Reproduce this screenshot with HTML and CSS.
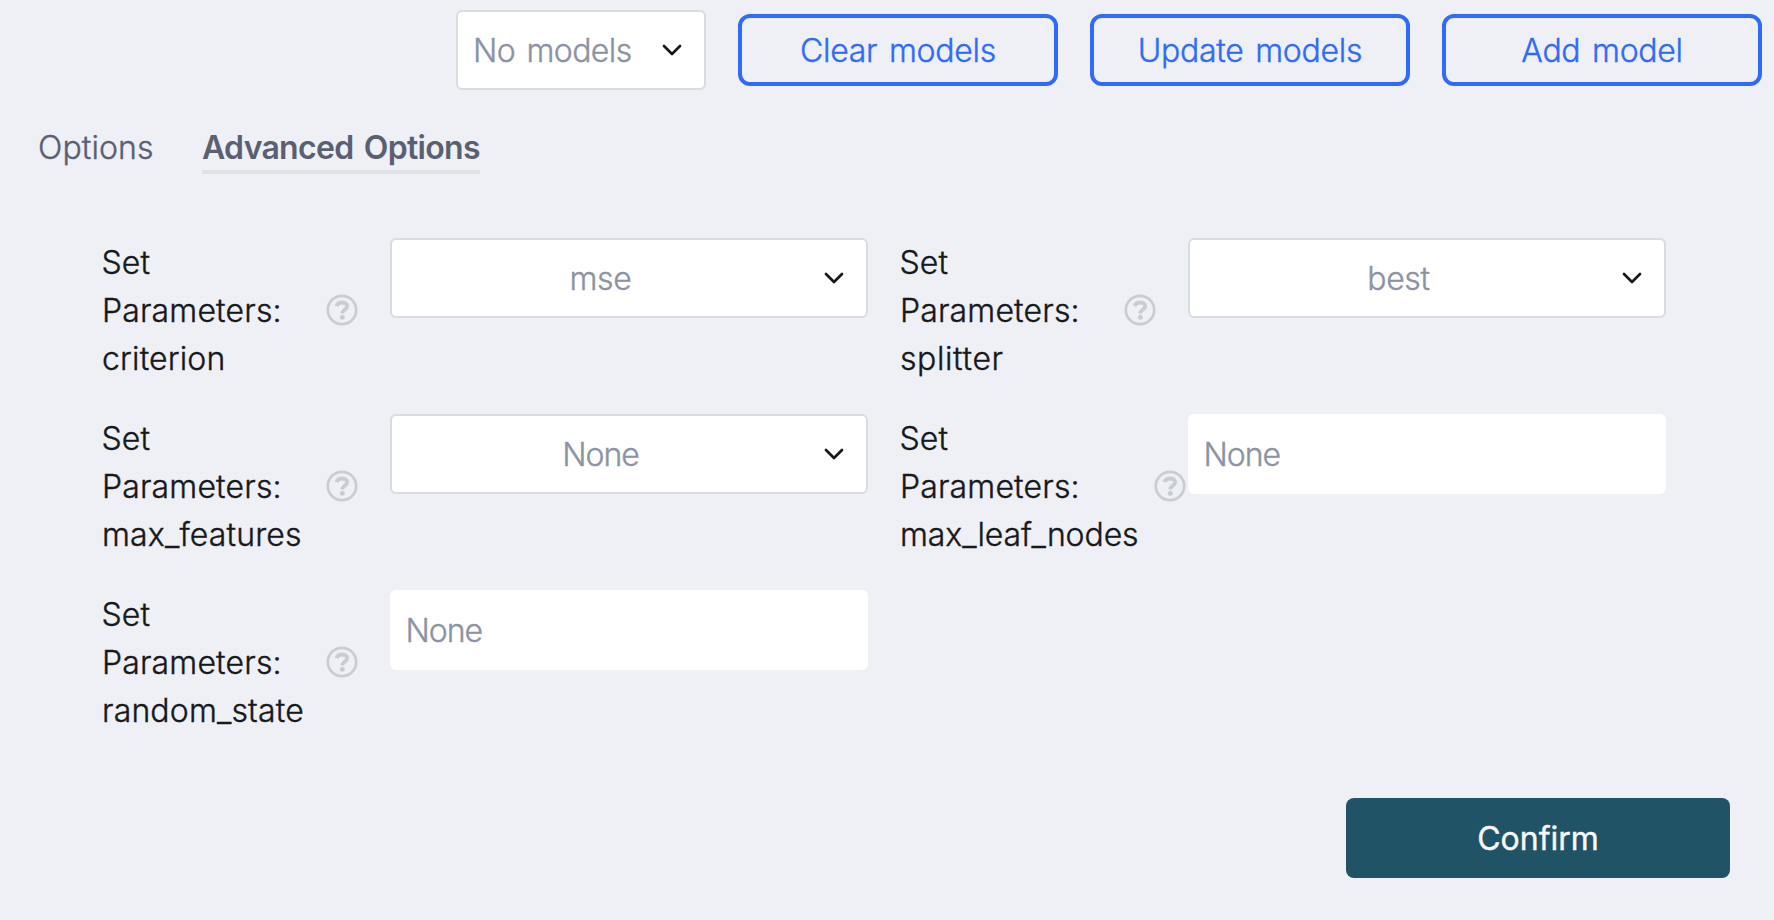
FILE: index.html
```html
<!DOCTYPE html>
<html lang="en">
<head>
<meta charset="utf-8">
<title>Advanced Options</title>
<link rel="stylesheet" href="styles.css">
</head>
<body>
<svg class="defs" aria-hidden="true">
  <symbol id="chevron" viewBox="0 0 24 24"><path d="M4 8 12 16 20 8" fill="none" stroke="currentColor" stroke-width="2.7" stroke-linecap="round" stroke-linejoin="round"/></symbol>
  <symbol id="help" viewBox="0 0 32 32"><circle cx="16" cy="16" r="14.200" fill="none" stroke="currentColor" stroke-width="2.700"/><path d="M10.500 12.200C11.400 9.600 13.400 8.500 16.200 8.500c3 0 5 1.500 5 3.800 0 3.200-4.900 3.300-4.900 7.100" fill="none" stroke="currentColor" stroke-width="3.800"/><circle cx="16.300" cy="23.200" r="2.500" fill="currentColor"/></symbol>
</svg>
<header class="toolbar">
  <div class="select select-models"><span class="value">No models</span><svg class="chevron"><use href="#chevron"/></svg></div>
  <button class="outline-btn">Clear models</button>
  <button class="outline-btn">Update models</button>
  <button class="outline-btn">Add model</button>
</header>
<nav class="tabs">
  <a class="tab">Options</a>
  <a class="tab tab-active">Advanced Options</a>
</nav>
<main class="params">
  <div class="param">
    <div class="label"><span class="label-text">Set<br>Parameters:<br>criterion</span><svg class="help"><use href="#help"/></svg></div>
    <div class="select"><span class="value">mse</span><svg class="chevron"><use href="#chevron"/></svg></div>
  </div>
  <div class="param">
    <div class="label"><span class="label-text">Set<br>Parameters:<br><span class="loose">splitter</span></span><svg class="help"><use href="#help"/></svg></div>
    <div class="select"><span class="value">best</span><svg class="chevron"><use href="#chevron"/></svg></div>
  </div>
  <div class="param">
    <div class="label"><span class="label-text">Set<br>Parameters:<br>max_features</span><svg class="help"><use href="#help"/></svg></div>
    <div class="select"><span class="value value-none">None</span><svg class="chevron"><use href="#chevron"/></svg></div>
  </div>
  <div class="param">
    <div class="label label-wide"><span class="label-text">Set<br>Parameters:<br><span class="tight">max_leaf_nodes</span></span><svg class="help"><use href="#help"/></svg></div>
    <div class="input">None</div>
  </div>
  <div class="param">
    <div class="label"><span class="label-text">Set<br>Parameters:<br>random_state</span><svg class="help"><use href="#help"/></svg></div>
    <div class="input">None</div>
  </div>
</main>
<footer class="actions"><button class="confirm">Confirm</button></footer>
</body>
</html>
```
FILE: styles.css
```css
* { box-sizing: border-box; }
body {
  margin: 0;
  height: 920px;
  overflow: hidden;
  background: #eff0f5;
  color: #17181c;
  font: 300 32px/48px Inter, "Liberation Sans", sans-serif;
  -webkit-text-stroke: 0.4px currentColor;
}
.defs { display: none; }
button { font: inherit; }
.toolbar {
  display: flex;
  align-items: center;
  justify-content: flex-end;
  gap: 32px;
  height: 80px;
  margin-top: 10px;
  padding-right: 12px;
  word-spacing: 3px;
  letter-spacing: -0.3px;
}
.select {
  display: flex;
  align-items: center;
  width: 478px;
  height: 80px;
  padding: 2px 20px 0 19px;
  background: #fff;
  border: 2px solid #d7dce0;
  border-radius: 6px;
  color: #8c93a3;
}
.value { flex: 1; text-align: center; white-space: nowrap; letter-spacing: -0.4px; }
.value-none { letter-spacing: -1px; }
.chevron {
  width: 24px;
  height: 24px;
  margin: 0 0 2px 32px;
  color: #17181c;
}
.select-models { width: 250px; padding: 2px 20px 0 15px; }
.select-models .value { text-align: left; letter-spacing: -0.6px; }
.select-models .chevron { margin-left: 0; }
.outline-btn {
  width: 320px;
  height: 72px;
  padding: 2px 0 0;
  border: 4px solid #2f6bf6;
  border-radius: 12px;
  background: transparent;
  color: #2f6bf6;
  letter-spacing: inherit;
  word-spacing: inherit;
}
.tabs {
  display: flex;
  gap: 48px;
  margin-top: 32px;
  padding-left: 38px;
  color: #5a6072;
}
.tab { width: 116px; height: 52px; padding-top: 2px; white-space: nowrap; letter-spacing: 0.1px; }
.tab-active {
  width: 278px;
  font-weight: 600;
  -webkit-text-stroke: 0;
  letter-spacing: -0.7px;
  word-spacing: 3px;
  border-bottom: 4px solid #dfe1e5;
}
.params {
  display: grid;
  grid-template-columns: 766px 766px;
  gap: 32px;
  margin-top: 64px;
  padding-left: 102px;
}
.param { display: flex; height: 144px; }
.label {
  display: flex;
  align-items: center;
  justify-content: space-between;
  flex: none;
  width: 288px;
  padding-right: 32px;
}
.label-text { width: 208px; padding-top: 2px; text-indent: -0.5px; letter-spacing: 0.15px; }
.label-wide { padding-right: 2px; }
.label-wide .label-text { width: 240px; }
.loose { letter-spacing: 0.6px; }
.tight { letter-spacing: -0.1px; }
.help { width: 32px; height: 32px; color: #c8ccd4; }
.input {
  width: 478px;
  height: 80px;
  padding: 17px 15.5px;
  background: #fff;
  border-radius: 6px;
  color: #8c93a3;
  letter-spacing: -1px;
}
.actions {
  display: flex;
  justify-content: flex-end;
  margin-top: 64px;
  padding-right: 44px;
}
.confirm {
  width: 384px;
  height: 80px;
  padding: 2px 0 0;
  border: 0;
  border-radius: 8px;
  background: #215366;
  color: #f7f7f8;
  font-weight: 400;
}
```
